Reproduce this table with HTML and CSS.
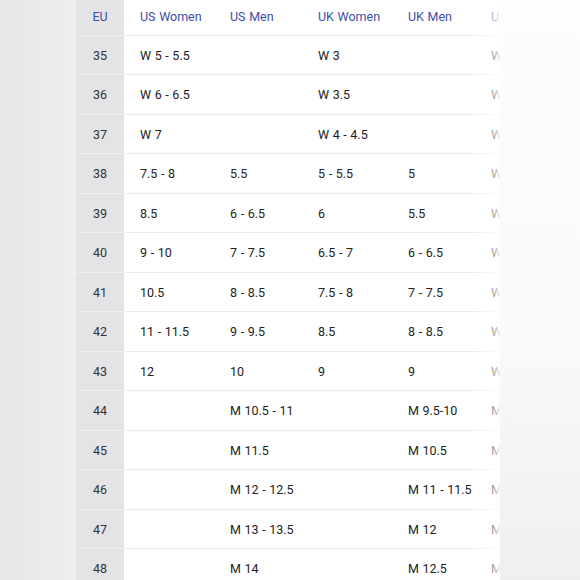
FILE: index.html
```html
<!DOCTYPE html>
<html>
<head>
<meta charset="utf-8">
<link rel="stylesheet" href="styles.css">
</head>
<body>
<div class="page">
  <div class="side"></div>
  <div class="sheet">
    <table class="sizes">
      <colgroup>
        <col class="c-eu"><col class="c-a"><col class="c-b"><col class="c-c"><col class="c-d"><col class="c-e">
      </colgroup>
      <thead>
        <tr><th class="eu">EU</th><th>US Women</th><th>US Men</th><th>UK Women</th><th>UK Men</th><th>Unisex</th></tr>
      </thead>
      <tbody>
        <tr><td class="eu">35</td><td>W 5 - 5.5</td><td></td><td>W 3</td><td></td><td>W 5 - 5.5</td></tr>
        <tr><td class="eu">36</td><td>W 6 - 6.5</td><td></td><td>W 3.5</td><td></td><td>W 6 - 6.5</td></tr>
        <tr><td class="eu">37</td><td>W 7</td><td></td><td>W 4 - 4.5</td><td></td><td>W 7</td></tr>
        <tr><td class="eu">38</td><td>7.5 - 8</td><td>5.5</td><td>5 - 5.5</td><td>5</td><td>W 7.5 - 8</td></tr>
        <tr><td class="eu">39</td><td>8.5</td><td>6 - 6.5</td><td>6</td><td>5.5</td><td>W 8.5</td></tr>
        <tr><td class="eu">40</td><td>9 - 10</td><td>7 - 7.5</td><td>6.5 - 7</td><td>6 - 6.5</td><td>W 9 - 10</td></tr>
        <tr><td class="eu">41</td><td>10.5</td><td>8 - 8.5</td><td>7.5 - 8</td><td>7 - 7.5</td><td>W 10.5</td></tr>
        <tr><td class="eu">42</td><td>11 - 11.5</td><td>9 - 9.5</td><td>8.5</td><td>8 - 8.5</td><td>W 11 - 11.5</td></tr>
        <tr><td class="eu">43</td><td>12</td><td>10</td><td>9</td><td>9</td><td>W 12</td></tr>
        <tr><td class="eu">44</td><td></td><td>M 10.5 - 11</td><td></td><td>M 9.5-10</td><td>M 10.5 - 11</td></tr>
        <tr><td class="eu">45</td><td></td><td>M 11.5</td><td></td><td>M 10.5</td><td>M 11.5</td></tr>
        <tr><td class="eu">46</td><td></td><td>M 12 - 12.5</td><td></td><td>M 11 - 11.5</td><td>M 12 - 12.5</td></tr>
        <tr><td class="eu">47</td><td></td><td>M 13 - 13.5</td><td></td><td>M 12</td><td>M 13 - 13.5</td></tr>
        <tr><td class="eu">48</td><td></td><td>M 14</td><td></td><td>M 12.5</td><td>M 14</td></tr>
      </tbody>
    </table>
    <div class="fade"></div>
  </div>
  <div class="rest"></div>
</div>
</body>
</html>
```

FILE: styles.css
```css
html, body {
  margin: 0;
  padding: 0;
}
body {
  font-family: Roboto, "Noto Sans", sans-serif;
  -webkit-font-smoothing: antialiased;
}
.page {
  display: flex;
  width: 580px;
  height: 580px;
  overflow: hidden;
}
.side {
  width: 76px;
  flex: none;
  background: linear-gradient(90deg, #e6e5e8 0%, #ebeaed 60%, #efeff1 100%);
}
.sheet {
  position: relative;
  width: 424px;
  flex: none;
  overflow: hidden;
  background: #ffffff;
}
.rest {
  flex: 1;
  background: linear-gradient(180deg, #fdfdfd 0%, #f9f9f9 60%, #efefef 100%);
}
.sizes {
  border-collapse: collapse;
  table-layout: fixed;
  width: 498px;
  font-size: 12.5px;
  color: #222222;
  word-spacing: 0.5px;
}
.c-eu { width: 48px; }
.c-a { width: 90px; }
.c-b { width: 88px; }
.c-c { width: 90px; }
.c-d { width: 83px; }
.c-e { width: 99px; }
.sizes th,
.sizes td {
  text-align: left;
  padding: 0 0 0 16px;
  white-space: nowrap;
  border-bottom: 1px solid #ececec;
}
.sizes th {
  height: 35px;
  font-weight: 400;
  color: #3d4ea8;
  padding-bottom: 1px;
  box-sizing: border-box;
}
.sizes td {
  height: 39.5px;
  padding-top: 1px;
  box-sizing: border-box;
}
.sizes .eu {
  background: #e4e3e6;
  text-align: center;
  padding-left: 0;
  color: #333333;
  border-bottom-color: #eeedf0;
}
.sizes th.eu {
  color: #3d4ea8;
}
.fade {
  position: absolute;
  top: 0;
  right: 0;
  bottom: 0;
  width: 26px;
  background: linear-gradient(90deg, rgba(255,255,255,0) 0%, rgba(255,255,255,0.45) 40%, rgba(255,255,255,0.6) 80%, rgba(253,253,253,0.95) 100%);
}
```
